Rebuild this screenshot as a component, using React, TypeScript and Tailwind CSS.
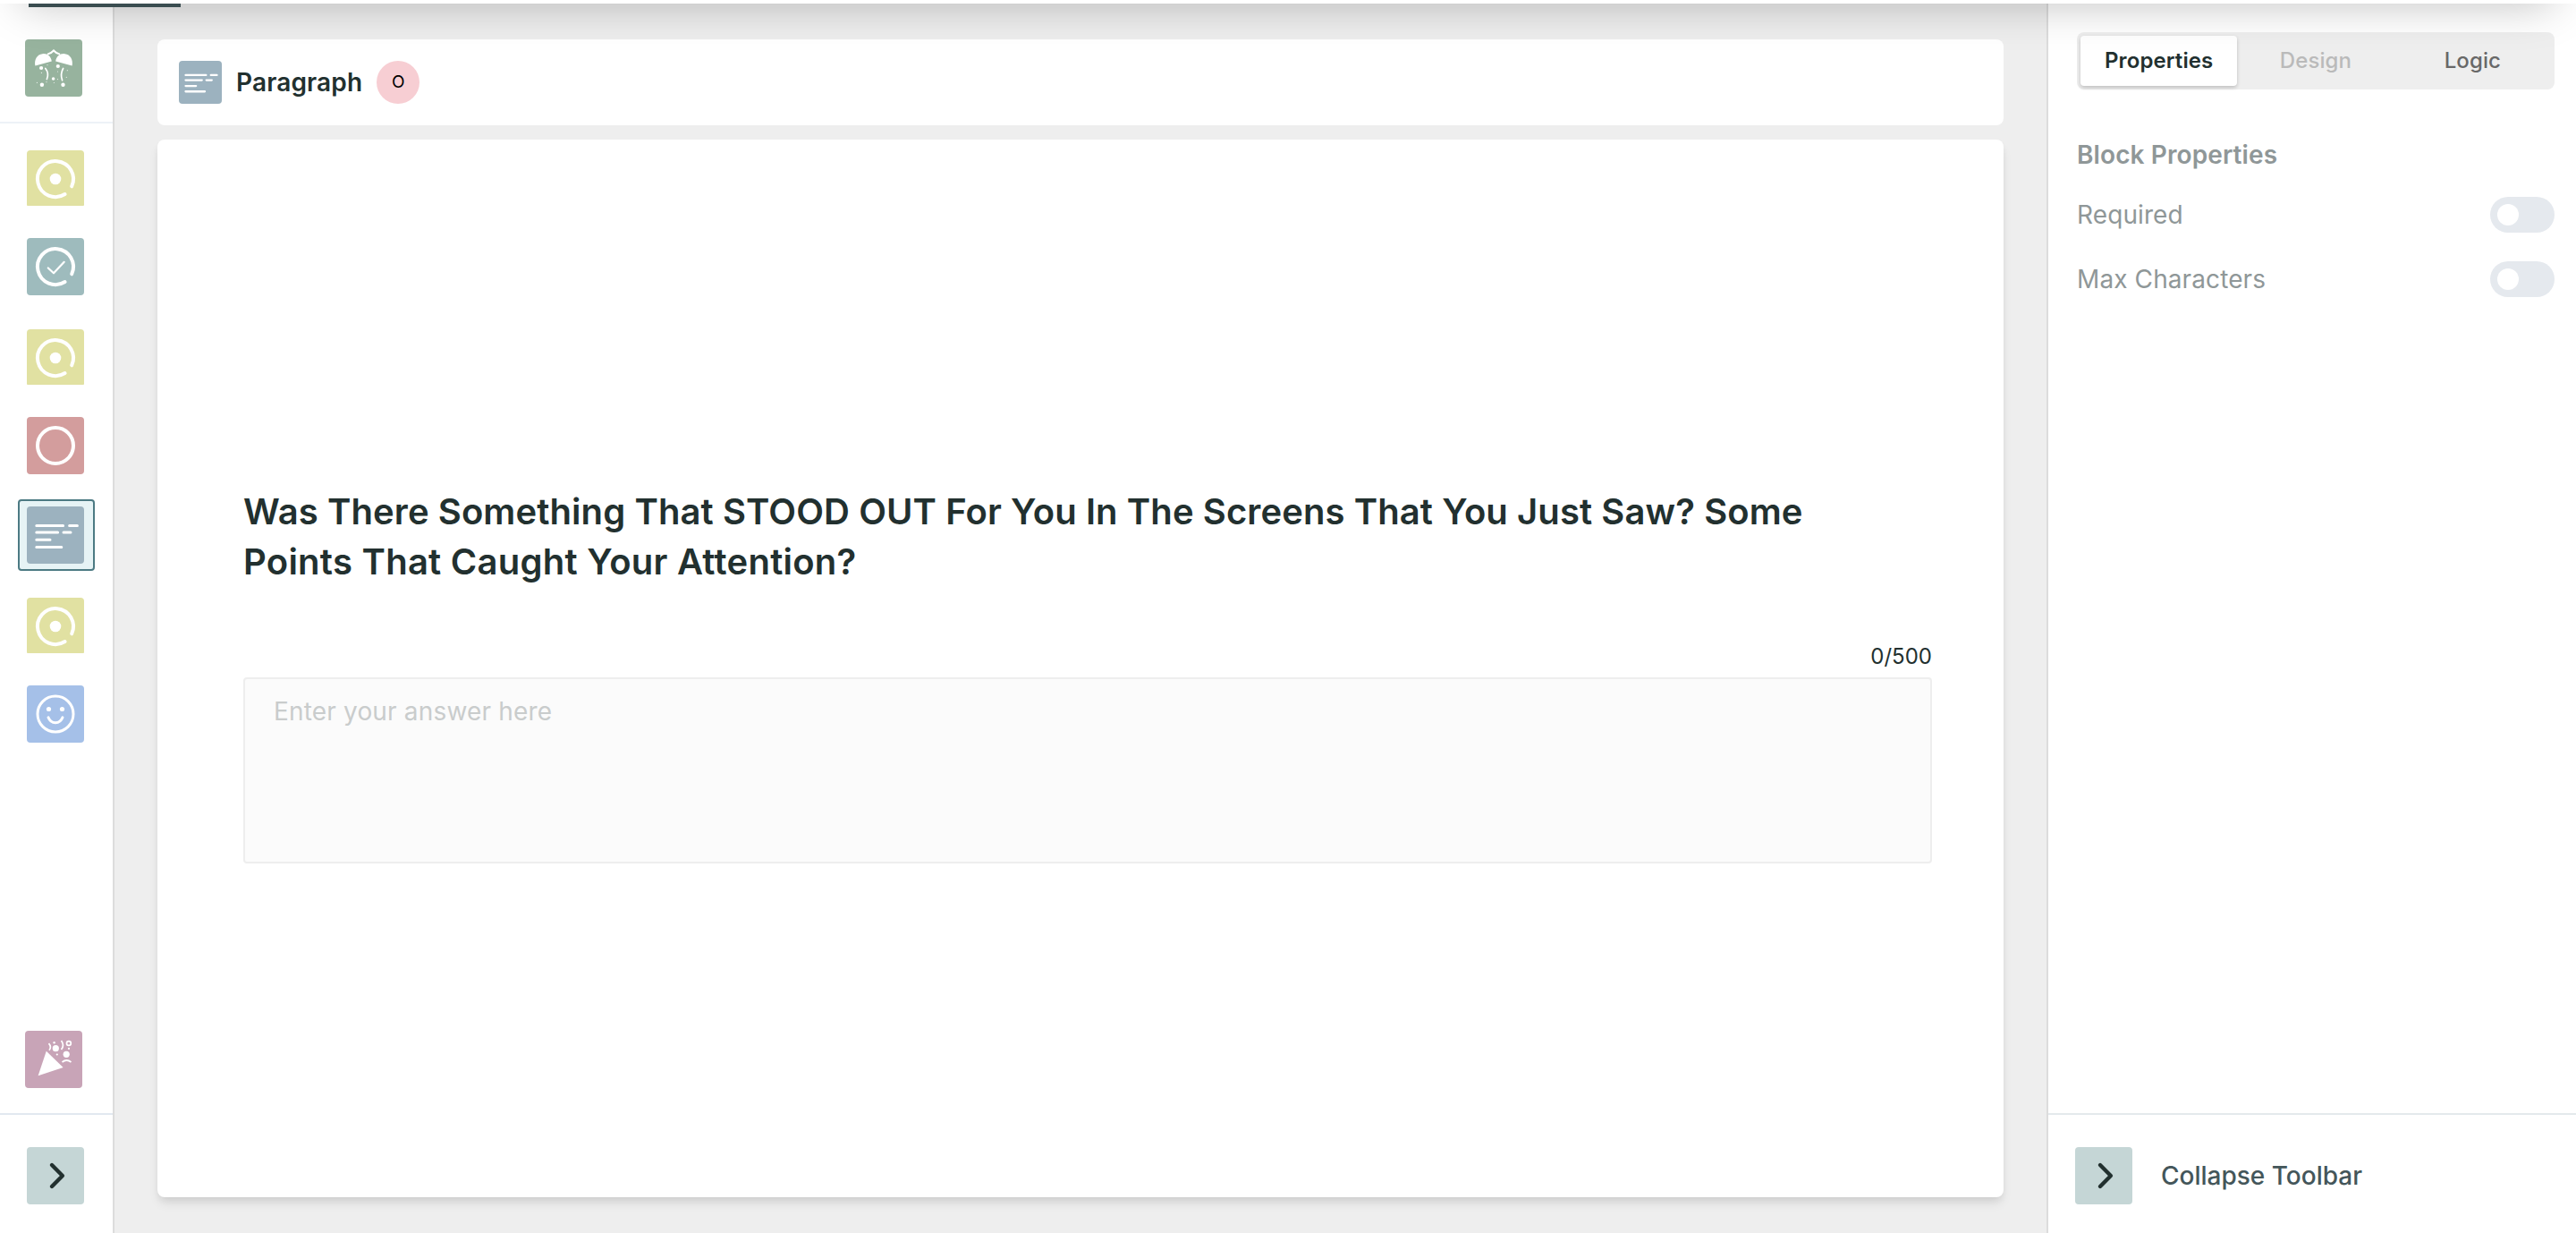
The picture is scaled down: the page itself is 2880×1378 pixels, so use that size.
import clsx from "clsx";
import type { ReactNode } from "react";

const Tile = ({ className, children }: { className?: string; children: ReactNode }) => (
  <div className={clsx("size-16 shrink-0 overflow-hidden rounded", className)}>{children}</div>
);

const RingIcon = ({ children }: { children?: ReactNode }) => (
  <svg viewBox="0 0 64 64" className="size-16" fill="none" stroke="white" strokeLinecap="round" strokeLinejoin="round">
    <path d="M50.2 40.3A20 20 0 1 0 42.6 49" strokeWidth="4" />
    {children}
  </svg>
);

const LinesIcon = ({ className, viewBox = "0 0 64 64" }: { className?: string; viewBox?: string }) => (
  <svg viewBox={viewBox} className={className} stroke="white" strokeWidth="3" strokeLinecap="round">
    <path d="M10.8 21.5H40.6M47.6 21.5H56.4M10.8 28.9H34.6M41 28.9H49M10.8 37.3H26M10.8 45.4H38.8" />
  </svg>
);

const ChevronIcon = () => (
  <svg viewBox="0 0 64 64" className="size-16" fill="none" stroke="#22302f" strokeWidth="4.4" strokeLinecap="round" strokeLinejoin="round">
    <path d="M28 20L39.9 32L28 44" />
  </svg>
);

const WelcomeIcon = () => (
  <svg viewBox="0 0 64 64" className="size-16" fill="white">
    <path d="M11.4 29.6C10 23 13.5 16.5 19.5 16.2C25 15.5 29 19 29.8 24.5Z" />
    <path d="M52.6 29.6C54 23 50.5 16.5 44.5 16.2C39 15.5 35 19 34.2 24.5Z" />
    <path d="M25 16.6Q29.5 15.5 32 12.5Q34.5 15.5 39 16.6" fill="none" stroke="white" strokeWidth="2" />
    <path d="M22.8 32.5Q27.2 38 24.4 44.5M42.6 32.5Q39 39 41.6 45.8" fill="none" stroke="white" strokeWidth="1.7" strokeLinecap="round" />
    <circle cx="18.1" cy="32" r="2.1" />
    <circle cx="36.8" cy="30" r="2.1" />
    <circle cx="31.6" cy="44" r="1.8" />
    <circle cx="18.9" cy="50.7" r="2.2" />
    <circle cx="42.5" cy="50.7" r="2.2" />
    <g opacity="0.8">
      <circle cx="25" cy="28.6" r="0.6" />
      <circle cx="18.4" cy="37.4" r="0.6" />
      <circle cx="36.5" cy="36" r="0.6" />
      <circle cx="47.3" cy="34.7" r="0.6" />
      <circle cx="46.3" cy="42.3" r="0.6" />
      <circle cx="36.5" cy="44.6" r="0.6" />
      <circle cx="13.4" cy="48.4" r="0.6" />
      <circle cx="24" cy="47.7" r="0.6" />
      <circle cx="32.4" cy="48.5" r="0.6" />
    </g>
  </svg>
);

const PartyIcon = () => (
  <svg viewBox="0 0 64 64" className="size-16" fill="white">
    <path d="M23.8 22.7L42.6 41L14.6 50.3Z" />
    <circle cx="34.3" cy="19.7" r="3.6" />
    <circle cx="46.2" cy="26.3" r="3.6" />
    <circle cx="32.6" cy="13.2" r="1.2" />
    <circle cx="49" cy="19.9" r="1.1" />
    <circle cx="35.8" cy="26.5" r="1.1" />
    <g fill="none" stroke="white" strokeWidth="1.7">
      <circle cx="48.9" cy="14" r="2.4" />
      <path d="M26.5 14.2Q30 18 27 21.8M40.5 11Q44.5 16.5 40.5 21" />
      <path d="M41.5 35Q46.5 31 51.5 35" />
    </g>
  </svg>
);

const SingleChoice = () => (
  <div className="h-16 pt-0.5">
    <div className="h-[62px] w-16 overflow-hidden rounded-t rounded-b-[1px] bg-[#e1e1a2]">
      <RingIcon>
        <circle cx="32" cy="32" r="6.3" fill="white" stroke="none" />
      </RingIcon>
    </div>
  </div>
);

const MultiChoice = () => (
  <Tile className="bg-[#9ebbbd]">
    <RingIcon>
      <path d="M23.8 33.5L30 39.3L41.7 26.8" strokeWidth="2.2" />
    </RingIcon>
  </Tile>
);

const RecordBlock = () => (
  <Tile className="bg-[#d39d9d]">
    <svg viewBox="0 0 64 64" className="size-16" fill="none" stroke="white" strokeWidth="4">
      <circle cx="32" cy="32" r="20" />
    </svg>
  </Tile>
);

const ParagraphBlock = () => (
  <Tile className="bg-[#9cb2bf]">
    <LinesIcon className="size-16" />
  </Tile>
);

const SmileyBlock = () => (
  <Tile className="bg-[#a5c0e8]">
    <svg viewBox="0 0 64 64" className="size-16" fill="none" stroke="white" strokeWidth="3" strokeLinecap="round">
      <circle cx="32" cy="32" r="20" />
      <path d="M24 35.8C27 43.7 37 43.7 40 35.8" />
      <circle cx="24.5" cy="26.5" r="2.6" fill="white" stroke="none" />
      <circle cx="39.5" cy="26.5" r="2.6" fill="white" stroke="none" />
    </svg>
  </Tile>
);

const blocks = [
  { id: 1, Icon: SingleChoice },
  { id: 2, Icon: MultiChoice },
  { id: 3, Icon: SingleChoice },
  { id: 4, Icon: RecordBlock },
  { id: 5, Icon: ParagraphBlock, selected: true },
  { id: 6, Icon: SingleChoice },
  { id: 7, Icon: SmileyBlock },
];

const Sidebar = () => (
  <aside className="flex w-32 shrink-0 flex-col border-r-2 border-[#dcdcdc] bg-white">
    <div className="h-[138px] border-b-2 border-[#edf2f7] pt-11 pl-7">
      <Tile className="bg-[#97b39e]">
        <WelcomeIcon />
      </Tile>
    </div>

    {/* Blocks */}
    <div className="flex flex-1 flex-col gap-5 pt-5 pl-5">
      {blocks.map(({ id, Icon, selected }) => (
        <div
          key={id}
          className={clsx(
            "h-20 w-[86px] rounded border-2 px-2 py-1.5",
            selected ? "border-[#4c7a83] bg-[#e6f3f5]" : "border-transparent"
          )}
        >
          <Icon />
        </div>
      ))}
    </div>

    <div className="pb-7 pl-7">
      <Tile className="bg-[#c8a4b7]">
        <PartyIcon />
      </Tile>
    </div>
    <div className="h-[134px] border-t-2 border-[#e2e8f0] pt-9 pl-[30px]">
      <Tile className="bg-[#c5d6d6]">
        <ChevronIcon />
      </Tile>
    </div>
  </aside>
);

const Toggle = () => (
  <div className="h-10 w-[72px] rounded-full bg-[#e5e9ee] p-2">
    <div className="size-6 rounded-full bg-white" />
  </div>
);

const PropertiesPanel = () => (
  <aside className="flex w-[592px] shrink-0 flex-col border-l-2 border-[#dcdcdc] bg-white">
    <div className="flex-1 pt-9 pr-6 pl-8 text-[28px] text-[#8f9798]">
      {/* Tabs */}
      <div className="grid h-16 grid-cols-3 rounded-lg bg-[#eeeeee] p-1 text-center text-2xl leading-[56px] font-medium tracking-[0.1px]">
        <div className="rounded bg-white font-semibold text-[#22302f] shadow-[0_2px_4px_rgba(0,0,0,0.2)]">Properties</div>
        <div className="text-[#bababa]">Design</div>
        <div className="text-[#686868]">Logic</div>
      </div>

      <h2 className="mt-[52px] leading-[42px] font-semibold tracking-[0.1px]">Block Properties</h2>
      <div className="mt-[26px] flex h-10 items-center justify-between">
        <span className="tracking-[0.1px]">Required</span>
        <Toggle />
      </div>
      <div className="mt-8 flex h-10 items-center justify-between">
        <span className="tracking-[0.1px]">Max Characters</span>
        <Toggle />
      </div>
    </div>
    <div className="flex h-[134px] gap-8 border-t-2 border-[#e4e9ec] pt-9 pl-[30px]">
      <Tile className="bg-[#c5d6d6]">
        <ChevronIcon />
      </Tile>
      <span className="text-[28px] leading-16 font-medium text-[#44565a]">Collapse Toolbar</span>
    </div>
  </aside>
);

const BlockEditor = () => (
  <main className="flex flex-1 flex-col gap-4 bg-[#eeeeee] px-12 pt-11 pb-10">
    <div className="flex h-24 items-center rounded-lg bg-white px-6">
      <div className="size-12 rounded bg-[#9cb2bf]">
        <LinesIcon className="size-12" viewBox="1 0.7 62.6 62.6" />
      </div>
      <span className="ml-4 text-[28px] font-semibold tracking-[0.15px] text-[#22302f]">Paragraph</span>
      <span className="ml-4 flex size-12 items-center justify-center rounded-full bg-[#f7ced3] text-[19px] text-black">
        O
      </span>
    </div>

    <div className="flex-1 rounded-lg bg-white px-[96px] pt-[388px] pr-20 shadow-[0_8px_12px_-2px_rgba(0,0,0,0.1),0_4px_8px_-2px_rgba(0,0,0,0.06)]">
      <h1 className="text-[40px] leading-[56px] font-semibold text-[#22302f]">
        <span className="tracking-[0.09px]">
          Was There Something That STOOD OUT For You In The Screens That You Just Saw? Some
        </span>
        <br />
        <span className="tracking-[0.26px]">Points That Caught Your Attention?</span>
      </h1>
      <p className="mt-[60px] text-right text-2xl leading-[36px] text-[#22302f]">0/500</p>
      <div className="mt-[5px] h-52 rounded border-2 border-[#eeeeee] bg-[#fbfbfb] px-8 pt-[15px] text-[28px] leading-[42px] tracking-[0.17px] text-[#c9cccc]">
        Enter your answer here
      </div>
    </div>
  </main>
);

const App = () => {
  return (
    <div className="relative flex h-[1378px] w-[2880px] overflow-hidden font-['Inter',sans-serif]">
      {/* Bottom edge of the navbar with its active tab marker */}
      <div className="absolute inset-x-0 -top-24 h-25 bg-white shadow-[0_25px_50px_-25px_rgba(0,0,0,0.26)]" />
      <div className="absolute top-1 left-8 h-1 w-[170px] bg-[#3a4d50]" />
      <Sidebar />
      <BlockEditor />
      <PropertiesPanel />
    </div>
  );
};

export default App;
